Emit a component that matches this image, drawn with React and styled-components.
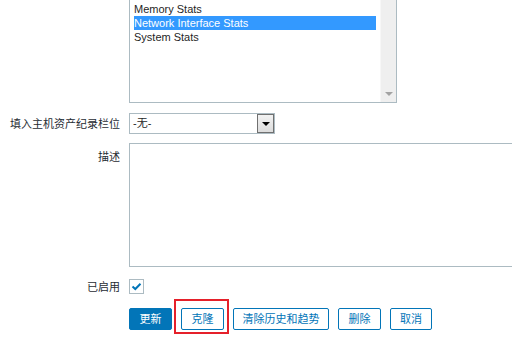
import React from 'react';
import styled, { createGlobalStyle } from 'styled-components';

const GlobalStyle = createGlobalStyle`
  html {
    overflow: hidden;
  }
  html, body {
    margin: 0;
    padding: 0;
    background: #fff;
  }
  body {
    font-family: "Liberation Sans", Arial, "Noto Sans CJK SC", sans-serif;
    font-size: 11px;
    color: #1f2c33;
  }
`;

const Form = styled.div`
  display: flex;
  flex-direction: column;
  width: 640px;
  padding-bottom: 10px;
`;

const Row = styled.div`
  display: flex;
  align-items: ${({ top }) => (top ? 'flex-start' : 'center')};
  margin-top: ${({ gap }) => gap}px;
`;

const Label = styled.div`
  flex: 0 0 129px;
  box-sizing: border-box;
  padding-right: 9px;
  text-align: right;
  padding-top: ${({ top }) => (top ? 7 : 0)}px;
  font-family: "Liberation Sans", Arial, "Noto Sans CJK SC", sans-serif;
  font-size: 11px;
  line-height: 14px;
  color: #1f2c33;
  white-space: nowrap;
`;

const Field = styled.div`
  display: flex;
  align-items: center;
  gap: 9px;
`;

const ListBox = styled.div`
  display: flex;
  box-sizing: border-box;
  width: 268px;
  height: 104px;
  border: 1px solid #acbbc2;
  background: #fff;
`;

const ListItems = styled.div`
  flex: 1;
  padding: 2px 4px;
`;

const ListItem = styled.div`
  height: 14px;
  line-height: 14px;
  white-space: nowrap;
  color: ${({ selected }) => (selected ? '#fff' : '#1f1f1f')};
  background: ${({ selected }) => (selected ? '#3399ff' : 'transparent')};
`;

const ScrollTrack = styled.div`
  flex: 0 0 16px;
  display: flex;
  flex-direction: column;
  justify-content: flex-end;
  align-items: center;
  background: #efefef;
  border-left: 1px solid #f7f7f7;
  box-sizing: border-box;
  padding-bottom: 6px;
`;

const ArrowDown = styled.div`
  width: 0;
  height: 0;
  border-left: 4px solid transparent;
  border-right: 4px solid transparent;
  border-top: 4px solid #a3a3a3;
`;

const Select = styled.div`
  display: flex;
  box-sizing: border-box;
  width: 146px;
  height: 21px;
  border: 1px solid #acbbc2;
  background: #fff;
`;

const SelectValue = styled.div`
  flex: 1;
  padding-left: 3px;
  line-height: 19px;
  font-size: 11px;
  color: #1f1f1f;
`;

const SelectButton = styled.div`
  flex: 0 0 17px;
  box-sizing: border-box;
  display: flex;
  align-items: center;
  justify-content: center;
  border: 1px solid #707070;
  background: linear-gradient(#f2f2f2, #dcdcdc);
`;

const Caret = styled.div`
  width: 0;
  height: 0;
  border-left: 4px solid transparent;
  border-right: 4px solid transparent;
  border-top: 4px solid #000;
`;

const TextArea = styled.div`
  box-sizing: border-box;
  width: 420px;
  height: 124px;
  border: 1px solid #acbbc2;
  background: #fff;
`;

const CheckBox = styled.div`
  box-sizing: border-box;
  width: 15px;
  height: 15px;
  border: 1px solid #acbbc2;
  background: #fff;
  display: flex;
  align-items: center;
  justify-content: center;
`;

const Button = styled.button`
  box-sizing: border-box;
  width: ${({ w }) => w}px;
  height: 22px;
  padding: 0;
  margin: 0;
  border: 1px solid #0275b8;
  border-radius: 2px;
  font-family: "Liberation Sans", Arial, "Noto Sans CJK SC", sans-serif;
  font-size: 11px;
  line-height: 20px;
  text-align: center;
  color: ${({ primary }) => (primary ? '#fff' : '#0275b8')};
  background: ${({ primary }) => (primary ? '#0275b8' : '#fff')};
  white-space: nowrap;
`;

const Marked = styled.span`
  position: relative;
  display: inline-flex;
`;

const MarkBox = styled.span`
  position: absolute;
  left: -7px;
  right: -5px;
  top: -9px;
  bottom: -4px;
  border: 2px solid #e5202a;
  pointer-events: none;
`;

const apps = ['Memory Stats', 'Network Interface Stats', 'System Stats'];

export default function App() {
  return (
    <>
      <GlobalStyle />
      <Form>
        <Row gap={-1} top>
          <Label />
          <ListBox>
            <ListItems>
              {apps.map((a) => (
                <ListItem key={a} selected={a === 'Network Interface Stats'}>{a}</ListItem>
              ))}
            </ListItems>
            <ScrollTrack>
              <ArrowDown />
            </ScrollTrack>
          </ListBox>
        </Row>
        <Row gap={10}>
          <Label>填入主机资产纪录栏位</Label>
          <Select>
            <SelectValue>-无-</SelectValue>
            <SelectButton>
              <Caret />
            </SelectButton>
          </Select>
        </Row>
        <Row gap={9} top>
          <Label top>描述</Label>
          <TextArea />
        </Row>
        <Row gap={12}>
          <Label>已启用</Label>
          <CheckBox>
            <svg width="11" height="9" viewBox="0 0 11 9">
              <path d="M1.5 4.5 L4.3 7 L9.5 1.8" fill="none" stroke="#0275b8" strokeWidth="2" />
            </svg>
          </CheckBox>
        </Row>
        <Row gap={14}>
          <Label />
          <Field>
            <Button primary w={43}>更新</Button>
            <Marked>
              <Button w={43}>克隆</Button>
              <MarkBox />
            </Marked>
            <Button w={96}>清除历史和趋势</Button>
            <Button w={43}>删除</Button>
            <Button w={42}>取消</Button>
          </Field>
        </Row>
      </Form>
    </>
  );
}
